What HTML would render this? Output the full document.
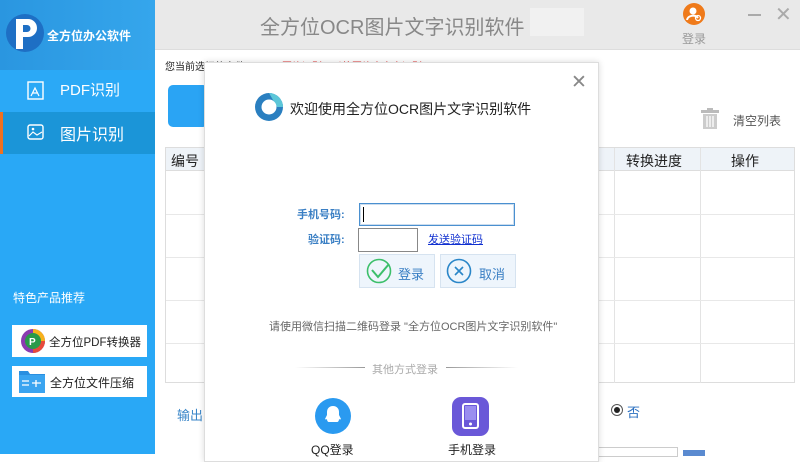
<!DOCTYPE html>
<html><head><meta charset="utf-8"><style>
*{margin:0;padding:0;box-sizing:border-box}
body{width:800px;height:454px;overflow:hidden;position:relative;background:#fff;font-family:"Liberation Sans","Noto Sans CJK SC",sans-serif;}
.a{position:absolute;white-space:nowrap}
</style></head><body>
<div class="a" style="left:0;top:0;width:155px;height:454px;background:#29a8f6"></div>
<div class="a" style="left:0;top:0;width:155px;height:70px;background:linear-gradient(90deg,#2a96e0,#35a6ec)"></div>
<svg class="a" style="left:4px;top:11px" width="42" height="44" viewBox="0 0 42 44"><circle cx="21" cy="22" r="19" fill="#1e6fc4"/><path d="M12 8h12a9 9 0 0 1 0 18h-5v12h-7z" fill="#fff"/><path d="M19 14h4a3.5 3.5 0 0 1 0 7h-4z" fill="#1e6fc4"/></svg>
<div class="a" style="left:47px;top:27px;color:#fff;font-size:12px;font-weight:bold">全方位办公软件</div>
<div class="a" style="left:0;top:70px;width:155px;height:42px;background:#2ba9f6"></div>
<div class="a" style="left:0;top:112px;width:155px;height:42px;background:#1b95d8"></div>
<div class="a" style="left:0;top:112px;width:3px;height:42px;background:#f07020"></div>
<svg class="a" style="left:27px;top:81px" width="17" height="19"><rect x="1" y="1" width="15" height="17" fill="none" stroke="#fff" stroke-width="1.4"/><path d="M4 15l4-8 4 8M6 12h4" fill="none" stroke="#fff" stroke-width="1.2"/></svg>
<div class="a" style="left:60px;top:79px;color:#fff;font-size:15px">PDF识别</div>
<svg class="a" style="left:27px;top:124px" width="17" height="16"><rect x="1" y="1" width="15" height="14" rx="2" fill="none" stroke="#fff" stroke-width="1.4"/><path d="M2 12l4-4 4 3 5-3" fill="none" stroke="#fff" stroke-width="1.2"/><circle cx="6" cy="5" r="1.3" fill="#fff"/></svg>
<div class="a" style="left:60px;top:121px;color:#fff;font-size:16px">图片识别</div>
<div class="a" style="left:13px;top:289px;color:#fff;font-size:12px">特色产品推荐</div>
<div class="a" style="left:12px;top:325px;width:135px;height:32px;background:#fff"></div>
<svg class="a" style="left:20px;top:328px" width="26" height="26"><circle cx="13" cy="13" r="12" fill="#8b3ab0"/><path d="M13 1a12 12 0 0 1 12 12h-12z" fill="#f7b21b"/><path d="M25 13a12 12 0 0 1-12 12v-12z" fill="#e84a3a"/><circle cx="13" cy="13" r="8" fill="#2a9a4a"/><text x="9" y="17" font-size="10" fill="#fff" font-weight="bold" font-family="Liberation Sans">P</text></svg>
<div class="a" style="left:49px;top:334px;font-size:11.5px;color:#222">全方位PDF转换器</div>
<div class="a" style="left:12px;top:366px;width:135px;height:31px;background:#fff"></div>
<svg class="a" style="left:18px;top:368px" width="28" height="26"><path d="M1 3h9l2 3h15v19H1z" fill="#2a8fe0"/><rect x="1" y="7" width="26" height="18" fill="#3aa4f0"/><path d="M4 13h7M4 17h7M14 15h9M18 12v7" stroke="#fff" stroke-width="1.3"/></svg>
<div class="a" style="left:50px;top:374px;font-size:12px;color:#222">全方位文件压缩</div>

<div class="a" style="left:155px;top:0;width:645px;height:50px;background:#e9e9e9;border-bottom:1px solid #ddd"></div>
<div class="a" style="left:260px;top:11px;font-size:20px;color:#888">全方位OCR图片文字识别软件</div>
<div class="a" style="left:530px;top:8px;width:54px;height:28px;background:#f1f1f1"></div>
<svg class="a" style="left:683px;top:3px" width="22" height="22"><circle cx="11" cy="11" r="11" fill="#ef7a1a"/><circle cx="10" cy="8" r="3.5" fill="#fff"/><path d="M4 17a6 5 0 0 1 11-2" fill="none" stroke="#fff" stroke-width="2"/><circle cx="15" cy="15" r="2.5" fill="none" stroke="#fff" stroke-width="1.3"/></svg>
<div class="a" style="left:682px;top:30px;font-size:12px;color:#999">登录</div>
<div class="a" style="left:748px;top:14px;width:13px;height:2px;background:#aaa"></div>
<div class="a" style="left:775px;top:2px;font-size:20px;color:#aaa">✕</div>

<div class="a" style="left:165px;top:58px;font-size:10px;color:#222">您当前选择的文件</div>
<div class="a" style="left:282px;top:58px;font-size:10px;color:#e03030">图片识别可以将图片中文字识别</div>
<div class="a" style="left:168px;top:85px;width:40px;height:42px;background:#2aa4f4;border-radius:5px"></div>
<svg class="a" style="left:700px;top:108px" width="20" height="22"><rect x="1" y="2" width="18" height="3" fill="#bbb"/><rect x="7" y="0" width="6" height="3" fill="#bbb"/><path d="M3 6h14v15H3z" fill="#ccc"/><path d="M7 8v11M10 8v11M13 8v11" stroke="#fff" stroke-width="1.3"/></svg>
<div class="a" style="left:733px;top:112px;font-size:12px;color:#555">清空列表</div>
<div class="a" style="left:165px;top:147px;width:630px;height:236px;border:1px solid #ddd"></div>
<div class="a" style="left:166px;top:148px;width:628px;height:23px;background:#eef3f8;border-bottom:1px solid #ddd"></div>
<div class="a" style="left:171px;top:151px;font-size:14px;color:#222">编号</div>
<div class="a" style="left:626px;top:151px;font-size:14px;color:#222">转换进度</div>
<div class="a" style="left:731px;top:151px;font-size:14px;color:#222">操作</div>
<div class="a" style="left:614px;top:148px;width:1px;height:235px;background:#e3e3e3"></div>
<div class="a" style="left:700px;top:148px;width:1px;height:235px;background:#e3e3e3"></div>
<div class="a" style="left:166px;top:214px;width:628px;height:1px;background:#e8e8e8"></div>
<div class="a" style="left:166px;top:257px;width:628px;height:1px;background:#e8e8e8"></div>
<div class="a" style="left:166px;top:300px;width:628px;height:1px;background:#e8e8e8"></div>
<div class="a" style="left:166px;top:343px;width:628px;height:1px;background:#e8e8e8"></div>
<div class="a" style="left:177px;top:405px;font-size:13px;color:#3a86c8">输出</div>
<div class="a" style="left:611px;top:404px;width:12px;height:12px;border:1px solid #555;border-radius:50%"></div>
<div class="a" style="left:614px;top:407px;width:6px;height:6px;background:#222;border-radius:50%"></div>
<div class="a" style="left:627px;top:402px;font-size:13px;color:#2a6fc0">否</div>
<div class="a" style="left:598px;top:447px;width:80px;height:10px;border:1px solid #ccc"></div>
<div class="a" style="left:683px;top:450px;width:22px;height:6px;background:#5a8ad0"></div>

<div class="a" style="left:204px;top:62px;width:395px;height:400px;background:#fff;border:1px solid #ddd;box-shadow:0 0 6px rgba(0,0,0,.15)"></div>
<div class="a" style="left:571px;top:71px;font-size:19px;color:#888">✕</div>
<svg class="a" style="left:254px;top:92px" width="30" height="30"><circle cx="15" cy="15" r="14" fill="#2a7fc0"/><path d="M15 1a14 14 0 0 1 14 14h-6z" fill="#5cc6d8"/><circle cx="15" cy="15" r="7.5" fill="#fff"/></svg>
<div class="a" style="left:290px;top:99px;font-size:14px;color:#222">欢迎使用全方位OCR图片文字识别软件</div>
<div class="a" style="left:297px;top:206px;font-size:11px;color:#3a7fc4;font-weight:bold">手机号码:</div>
<div class="a" style="left:359px;top:203px;width:156px;height:23px;border:1px solid #4a90d0;box-shadow:inset 0 0 0 1px #cde"></div>
<div class="a" style="left:363px;top:207px;width:1px;height:15px;background:#000"></div>
<div class="a" style="left:308px;top:231px;font-size:11px;color:#3a7fc4;font-weight:bold">验证码:</div>
<div class="a" style="left:358px;top:228px;width:60px;height:24px;border:1px solid #888"></div>
<div class="a" style="left:428px;top:231px;font-size:11px;color:#1030d0;text-decoration:underline">发送验证码</div>
<div class="a" style="left:359px;top:254px;width:76px;height:34px;background:#eef5fc;border:1px solid #d6e3f0"></div>
<svg class="a" style="left:366px;top:258px" width="26" height="26"><circle cx="13" cy="13" r="11.5" fill="none" stroke="#3cbf6a" stroke-width="1.6"/><path d="M6 12l6 7 11-13" fill="none" stroke="#3cbf6a" stroke-width="2"/></svg>
<div class="a" style="left:398px;top:264px;font-size:13px;color:#3a7fc4">登录</div>
<div class="a" style="left:440px;top:254px;width:76px;height:34px;background:#eef5fc;border:1px solid #d6e3f0"></div>
<svg class="a" style="left:446px;top:258px" width="26" height="26"><circle cx="13" cy="13" r="11.5" fill="none" stroke="#2a86c8" stroke-width="1.6"/><path d="M9 9l8 8M17 9l-8 8" stroke="#2a86c8" stroke-width="1.6"/></svg>
<div class="a" style="left:479px;top:264px;font-size:13px;color:#3a7fc4">取消</div>
<div class="a" style="left:269px;top:318px;font-size:11px;color:#666">请使用微信扫描二维码登录 "全方位OCR图片文字识别软件"</div>
<div class="a" style="left:295px;top:367px;width:70px;height:1px;background:linear-gradient(90deg,#fff,#999)"></div>
<div class="a" style="left:446px;top:367px;width:72px;height:1px;background:linear-gradient(90deg,#999,#fff)"></div>
<div class="a" style="left:372px;top:361px;font-size:11px;color:#aaa">其他方式登录</div>
<svg class="a" style="left:314px;top:397px" width="38" height="38"><circle cx="19" cy="19" r="18" fill="#2a9af0"/><path d="M19 9c-4 0-6 3-6 6v3l-2 4c1 1 2 0 2 0 0 2 1 3 2 3h8c1 0 2-1 2-3 0 0 1 1 2 0l-2-4v-3c0-3-2-6-6-6z" fill="#fff"/></svg>
<svg class="a" style="left:452px;top:397px" width="37" height="39"><rect x="0" y="0" width="37" height="39" rx="9" fill="#6a58d8"/><rect x="11" y="7" width="15" height="24" rx="2" fill="none" stroke="#fff" stroke-width="2"/><circle cx="18.5" cy="27" r="1.5" fill="#fff"/><rect x="13" y="9" width="11" height="14" fill="#9a8ef0"/></svg>
<div class="a" style="left:311px;top:441px;font-size:12px;color:#222">QQ登录</div>
<div class="a" style="left:448px;top:441px;font-size:12px;color:#222">手机登录</div>
</body></html>
